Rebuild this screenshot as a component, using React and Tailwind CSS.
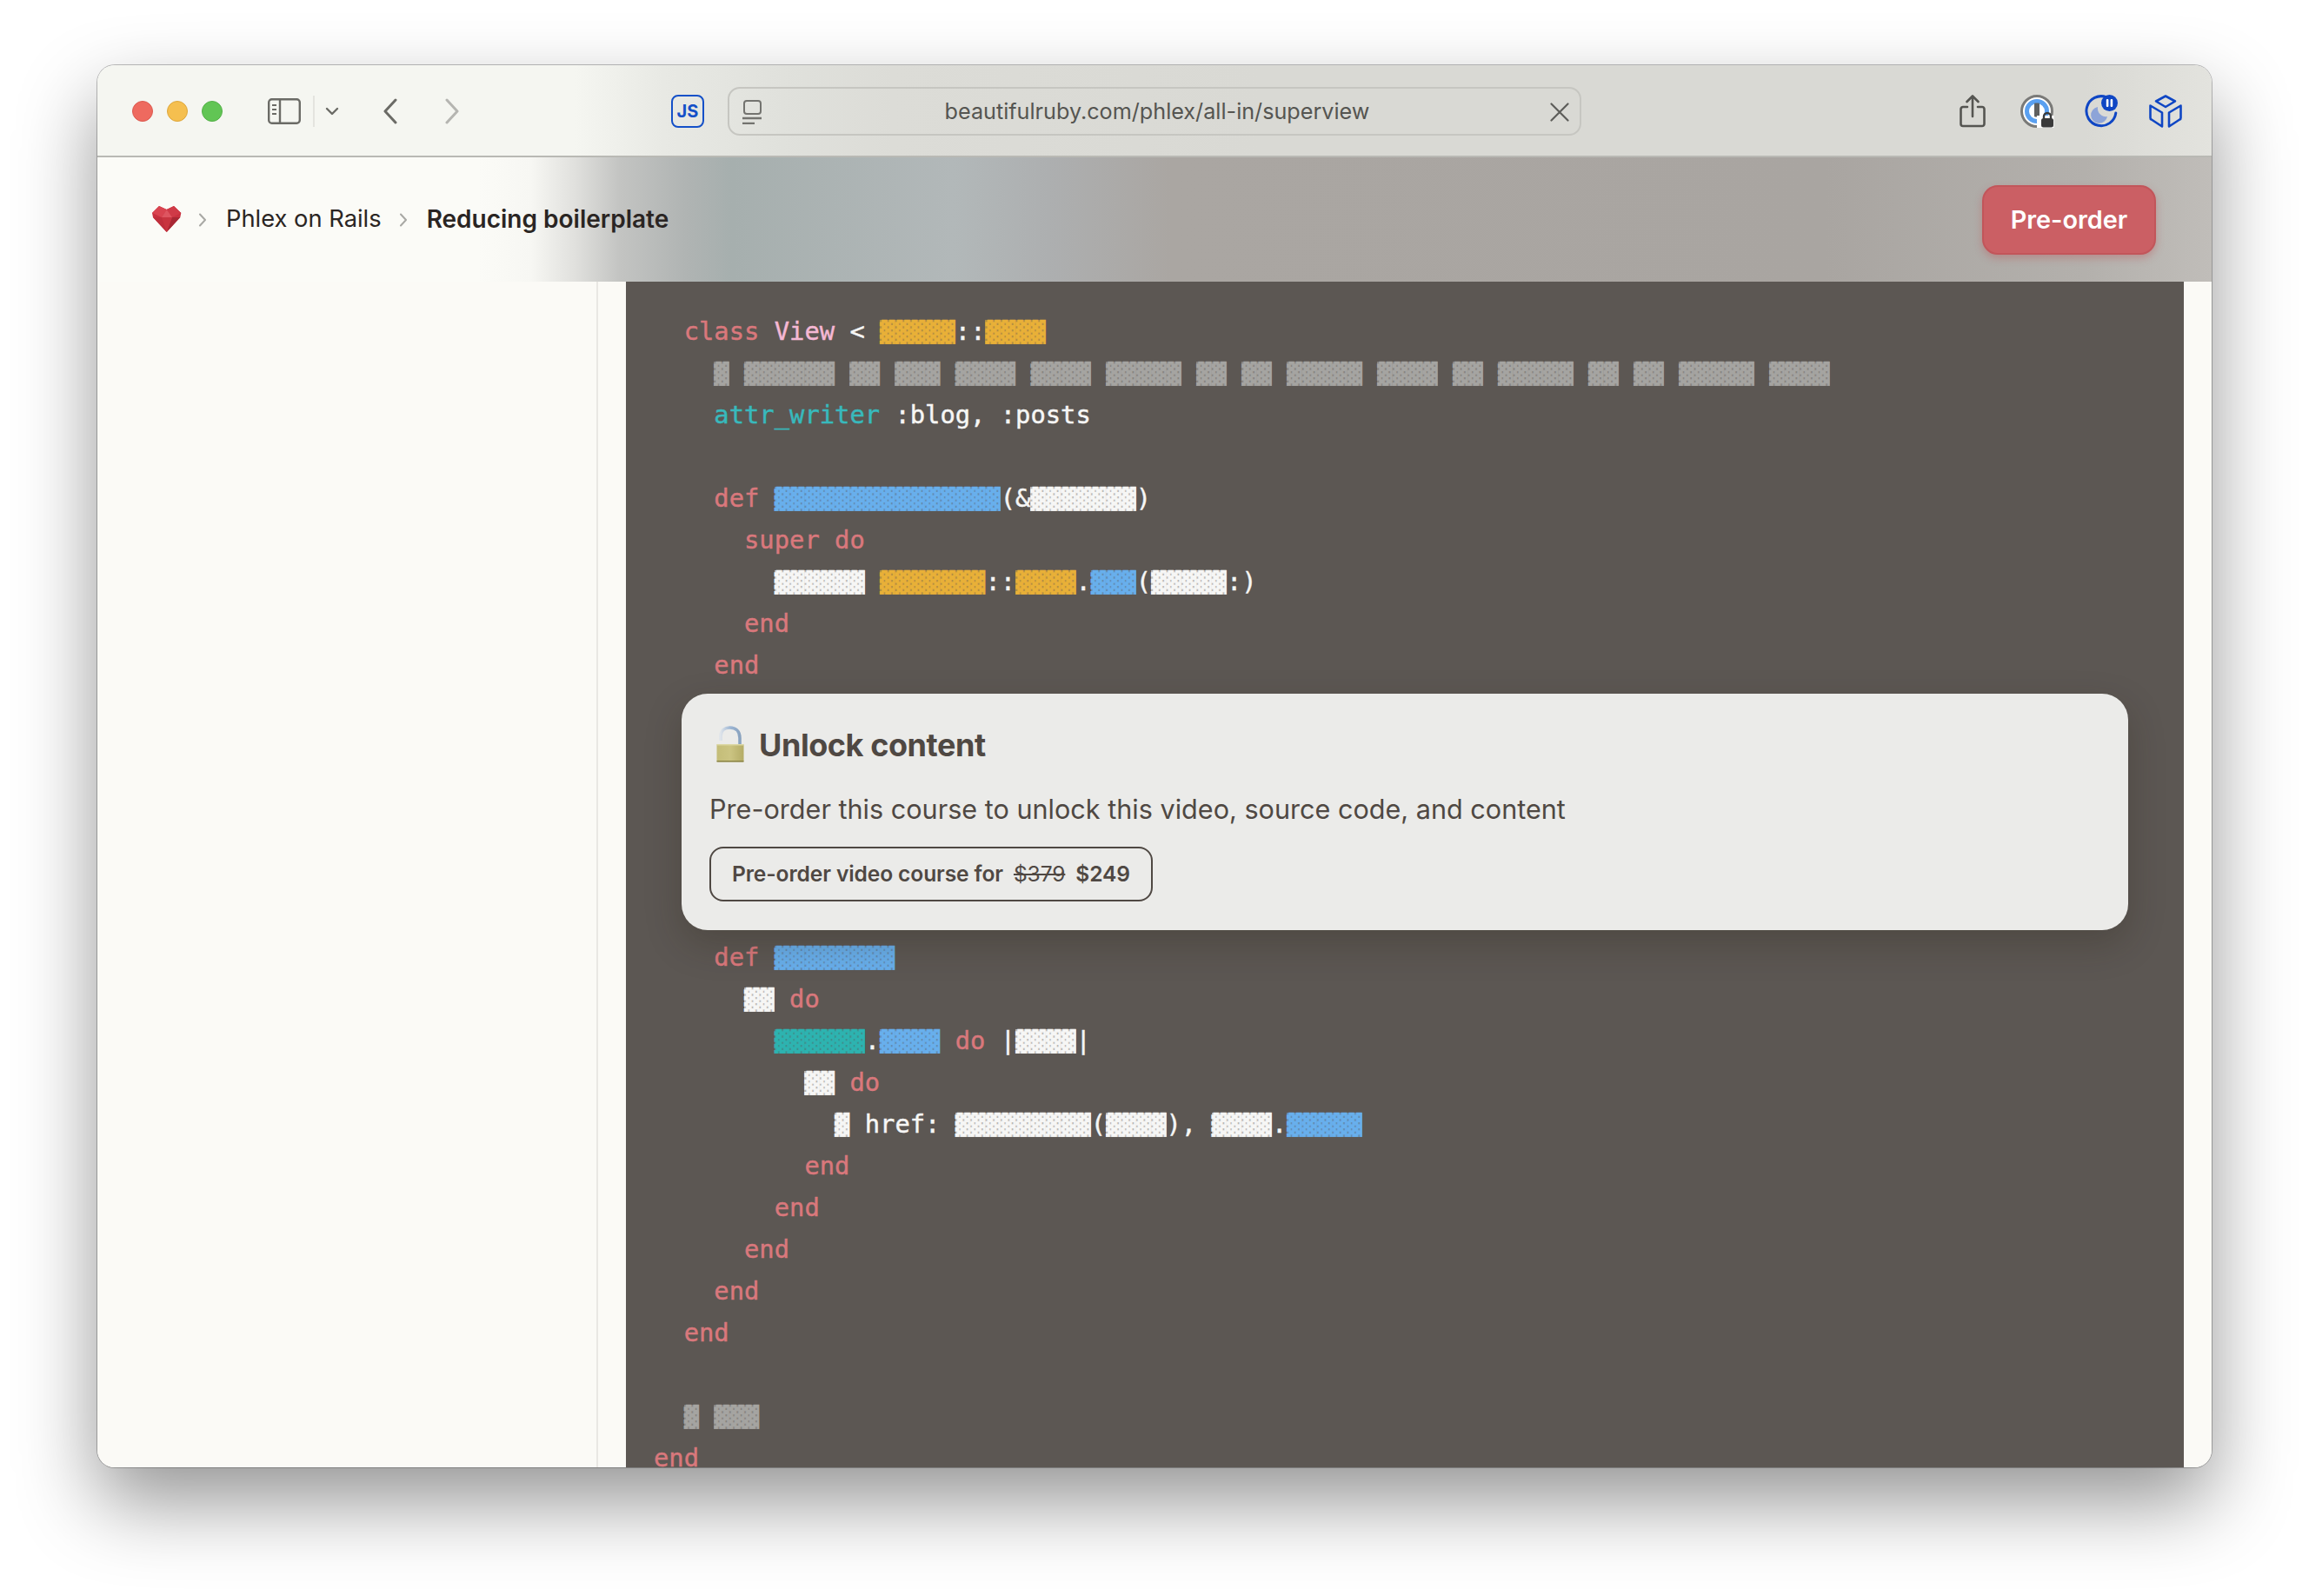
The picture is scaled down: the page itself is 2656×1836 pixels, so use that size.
const barBase = "inline-block h-[34px] leading-[34px] align-[-1px] scale-y-[0.82] [-webkit-text-stroke:0.3px]";
const K = ({ children }) => <span className="text-[#d9787c]">{children}</span>;
const W = ({ children }) => <span className={`${barBase} text-[#f6f6f5] bg-[#f6f6f5]/60`}>{children}</span>;
const G = ({ children }) => <span className={`${barBase} text-[#e8b038] bg-[#e8b038]/60`}>{children}</span>;
const B = ({ children }) => <span className={`${barBase} text-[#68afec] bg-[#68afec]/60`}>{children}</span>;
const T = ({ children }) => <span className={`${barBase} text-[#2db3b0] bg-[#2db3b0]/60`}>{children}</span>;
const A = ({ children }) => <span className={`${barBase} text-[#a5a4a1] bg-[#a5a4a1]/60`}>{children}</span>;
const bar = (n) => "▓".repeat(n);

function Line({ children }) {
  return <div className="h-[48px] leading-[48px] whitespace-pre">{children || " "}</div>;
}

function Code() {
  return (
    <div className="relative flex-1 bg-[#5c5753] pl-[32px] pt-[33px] overflow-hidden font-['DejaVu_Sans_Mono',monospace] text-[28.8px] text-[#f6f6f5] [-webkit-text-stroke:0.45px]">
      <Line>  <K>class</K> <span className="text-[#f5b8d4]">View</span> {"<"} <G>{bar(5)}</G>::<G>{bar(4)}</G></Line>
      <Line>    {[1,6,2,3,4,4,5,2,2,5,4,2,5,2,2,5,4].map((n, i) => (
        <span key={i}>{i > 0 ? " " : ""}<A>{bar(n)}</A></span>
      ))}</Line>
      <Line>    <span className="text-[#38b9bc]">attr_writer</span> :blog, :posts</Line>
      <Line />
      <Line>    <K>def</K> <B>{bar(15)}</B>(&amp;<W>{bar(7)}</W>)</Line>
      <Line>      <K>super do</K></Line>
      <Line>        <W>{bar(6)}</W> <G>{bar(7)}</G>::<G>{bar(4)}</G>.<B>{bar(3)}</B>(<W>{bar(5)}</W>:)</Line>
      <Line>      <K>end</K></Line>
      <Line>    <K>end</K></Line>
      <Line /><Line /><Line /><Line /><Line /><Line />
      <Line>    <K>def</K> <B>{bar(8)}</B></Line>
      <Line>      <W>{bar(2)}</W> <K>do</K></Line>
      <Line>        <T>{bar(6)}</T>.<B>{bar(4)}</B> <K>do</K> |<W>{bar(4)}</W>|</Line>
      <Line>          <W>{bar(2)}</W> <K>do</K></Line>
      <Line>            <W>{bar(1)}</W> href: <W>{bar(9)}</W>(<W>{bar(4)}</W>), <W>{bar(4)}</W>.<B>{bar(5)}</B></Line>
      <Line>          <K>end</K></Line>
      <Line>        <K>end</K></Line>
      <Line>      <K>end</K></Line>
      <Line>    <K>end</K></Line>
      <Line>  <K>end</K></Line>
      <Line />
      <Line>  <A>{bar(1)}</A> <A>{bar(3)}</A></Line>
      <Line><K>end</K></Line>

      <div className="absolute left-[64px] top-[474px] w-[1664px] h-[272px] rounded-[30px] bg-[#ebebe9] shadow-[0_16px_40px_rgba(40,30,20,0.25)] px-[32px] pt-[36px] font-['Inter',sans-serif] text-[#4f4843] [-webkit-text-stroke:0px]">
        <div className="flex items-center h-[44px]">
          <svg width="32" height="43" viewBox="0 0 32 43" className="ml-[8px] mr-[17px] shrink-0">
            <defs>
              <linearGradient id="lockBody" x1="0" y1="0" x2="1" y2="0">
                <stop offset="0" stopColor="#c4bd78" />
                <stop offset="0.5" stopColor="#cbc482" />
                <stop offset="1" stopColor="#b4ac66" />
              </linearGradient>
              <linearGradient id="shackle" x1="0" y1="0" x2="1" y2="0">
                <stop offset="0" stopColor="#dfe4ea" />
                <stop offset="0.5" stopColor="#9db6d4" />
                <stop offset="1" stopColor="#8aa3bf" />
              </linearGradient>
            </defs>
            <path d="M5 17V12C5 5 10 2 15.5 2C22 2 27 6 27 14V21" fill="none" stroke="url(#shackle)" strokeWidth="3.6" />
            <rect x="0.5" y="21" width="31" height="20.5" rx="1" fill="url(#lockBody)" />
            <rect x="0.5" y="21" width="31" height="1.5" fill="#dcd8a4" />
            <rect x="0.5" y="40" width="31" height="1.5" fill="#8b8548" />
          </svg>
          <h2 className="mt-[2px] text-[36px] font-bold leading-[44px] tracking-[-0.012em]">Unlock content</h2>
        </div>
        <p className="mt-[32px] text-[30.6px] leading-[42px]">Pre-order this course to unlock this video, source code, and content</p>
        <div className="mt-[22px] inline-flex items-center h-[63px] w-[510px] border-2 border-[#4f4843] rounded-[16px] px-[24px] text-[24.6px] font-semibold tracking-[-0.005em]">
          <span>Pre-order video course for</span>
          <span className="ml-[12px] line-through font-normal">$379</span>
          <span className="ml-[12px] font-semibold">$249</span>
        </div>
      </div>
    </div>
  );
}

function TitleBar() {
  return (
    <div className="h-[106px] shrink-0 flex items-center pl-[40px] pt-[2px] border-b-2 border-[#b9b9b4] bg-[linear-gradient(90deg,#f5f6f1_0%,#f5f6f1_22.6%,#e8e9e4_26.8%,#e0e1dc_32.4%,#dcdcd7_37.6%,#d9d9d4_55%,#d9d9d4_94%,#e3e3de_100%)]">
      <div className="flex gap-[16px]">
        <span className="w-[24px] h-[24px] rounded-full bg-[#ee6a5f] border border-[#dc5a50]" />
        <span className="w-[24px] h-[24px] rounded-full bg-[#f5bf4f] border border-[#dea73c]" />
        <span className="w-[24px] h-[24px] rounded-full bg-[#61c554] border border-[#54b048]" />
      </div>
      <svg width="38" height="30" viewBox="0 0 38 30" className="ml-[52px]" fill="none" stroke="#6b6b66">
        <rect x="1.2" y="1.2" width="35.6" height="27.6" rx="3.5" strokeWidth="2.4" />
        <path d="M14 1v28" strokeWidth="2.4" />
        <path d="M5 8h5M5 13h5M5 18h5" strokeWidth="2" />
      </svg>
      <span className="ml-[14px] w-[2px] h-[36px] bg-[#e4e4df]" />
      <svg width="16" height="10" viewBox="0 0 16 10" className="ml-[12px]" fill="none" stroke="#6b6b66" strokeWidth="2.4" strokeLinecap="round" strokeLinejoin="round">
        <path d="M2 2l6 6 6-6" />
      </svg>
      <svg width="18" height="30" viewBox="0 0 18 30" className="ml-[50px]" fill="none" stroke="#6b6b66" strokeWidth="3" strokeLinecap="round" strokeLinejoin="round">
        <path d="M15 2L3 15l12 13" />
      </svg>
      <svg width="18" height="30" viewBox="0 0 18 30" className="ml-[53px]" fill="none" stroke="#b5b5b1" strokeWidth="3" strokeLinecap="round" strokeLinejoin="round">
        <path d="M3 2l12 13L3 28" />
      </svg>
      <div className="ml-[243px] w-[38px] h-[38px] rounded-[8px] border-2 border-[#1450c8] flex items-center justify-center font-['Inter',sans-serif] text-[20px] font-bold text-[#1450c8] leading-none">JS</div>
      <div className="ml-[27px] w-[982px] h-[56px] rounded-[14px] border-2 border-[#c6c6c1] relative flex items-center justify-center font-['Inter',sans-serif] text-[25.2px] text-[#555551]">
        <svg width="24" height="28" viewBox="0 0 24 28" className="absolute left-[14px] top-[13px]" fill="none" stroke="#73736f">
          <rect x="3" y="1" width="19" height="15" rx="3" strokeWidth="2" />
          <path d="M1 21h22" strokeWidth="2.4" />
          <path d="M1 27h14" strokeWidth="2.4" />
        </svg>
        <span className="ml-[6px] mt-[2px]">beautifulruby.com/phlex/all-in/superview</span>
        <svg width="22" height="22" viewBox="0 0 22 22" className="absolute right-[12px] top-[16px]" fill="none" stroke="#5d5d59" strokeWidth="2.2" strokeLinecap="round">
          <path d="M1.5 1.5l19 19M20.5 1.5l-19 19" />
        </svg>
      </div>
      <svg width="30" height="38" viewBox="0 0 30 38" className="ml-[435px]" fill="none" stroke="#555551" strokeWidth="2.6" strokeLinecap="round" strokeLinejoin="round">
        <path d="M9 14H4a2.5 2.5 0 0 0-2.5 2.5v17A2.5 2.5 0 0 0 4 36h22a2.5 2.5 0 0 0 2.5-2.5v-17A2.5 2.5 0 0 0 26 14h-5" />
        <path d="M15 25V2M8.5 8L15 1.5 21.5 8" />
      </svg>
      <svg width="40" height="38" viewBox="0 0 40 38" className="ml-[40px]">
        <circle cx="19" cy="19" r="17.5" fill="#ffffff" stroke="#7a7a78" strokeWidth="3" />
        <circle cx="19" cy="19" r="11.5" fill="#ffffff" stroke="#5aa0f0" strokeWidth="5" />
        <rect x="16" y="9.5" width="6" height="16" rx="1" fill="#5f6060" />
        <rect x="19" y="24" width="19.5" height="14" fill="#ffffff" />
        <rect x="24" y="27" width="14" height="10.5" rx="2.5" fill="#3a3a3a" />
        <path d="M27 27v-2a4 4 0 0 1 8 0v2" fill="none" stroke="#3a3a3a" strokeWidth="2.4" />
      </svg>
      <svg width="38" height="38" viewBox="0 0 38 38" className="ml-[34px]">
        <path d="M25 2.8A17 17 0 1 0 35.8 21" fill="none" stroke="#0f46c4" strokeWidth="3" strokeLinecap="round" />
        <path d="M15 14A9.5 9.5 0 1 0 26 25A9.5 9.5 0 0 1 15 14z" fill="#8da4d8" />
        <circle cx="28.5" cy="9.5" r="9.5" fill="#0f46c4" />
        <rect x="24.8" y="5" width="2.6" height="9" rx="1" fill="#fff" />
        <rect x="29.6" y="5" width="2.6" height="9" rx="1" fill="#fff" />
      </svg>
      <svg width="38" height="38" viewBox="0 0 38 38" className="ml-[36px]" fill="none" stroke="#0f46c4" strokeWidth="2.6" strokeLinejoin="round">
        <path d="M19 1.5L30 7.5 19 14 8 7.5z" />
        <path d="M1.5 12.5L15 20.5V36.5L2.8 28.5a2 2 0 0 1-1.3-2z" />
        <path d="M36.5 12.5L23 20.5V36.5l12.2-8a2 2 0 0 0 1.3-2z" />
      </svg>
    </div>
  );
}

function Header() {
  return (
    <div className="h-[143px] shrink-0 flex items-center pl-[63px] pr-[64px] bg-[linear-gradient(90deg,#fbfbf7_0%,#fbfbf7_18%,#f7f7f3_20.5%,#e0e0dd_22.6%,#c3c4c2_24.7%,#b0b4b3_27.8%,#a6afae_30%,#b2b8b9_40.5%,#adafb0_45%,#aaa6a2_50.8%,#a9a5a1_81.7%,#b3b0ac_94%,#c0bdb9_100%)] font-['Inter',sans-serif] text-[#2a2523]">
      <svg width="34" height="30" viewBox="0 0 34 30" className="shrink-0 mb-[1px]">
        <path d="M8 0L16.7 4 25 0 33.3 8 32.3 13 16.7 30 1 13 0 8z" fill="#c8313f" />
        <path d="M8 0L16.7 4 11 13 0 8z" fill="#d94450" />
        <path d="M25 0L16.7 4 23 13 33.3 8z" fill="#cf3a47" />
        <path d="M16.7 4L23 13H11z" fill="#de5560" />
        <path d="M1 13L16.7 30 11 13z" fill="#bf2f3c" />
        <path d="M32.3 13L16.7 30 23 13z" fill="#a82834" />
        <path d="M11 13H23L16.7 30z" fill="#c8343f" />
      </svg>
      <svg width="10" height="16" viewBox="0 0 10 16" className="ml-[19px]" fill="none" stroke="#a8a8a4" strokeWidth="2" strokeLinecap="round" strokeLinejoin="round"><path d="M2 1.5L8 8l-6 6.5" /></svg>
      <span className="ml-[22px] text-[27.3px] mb-[1px]">Phlex on Rails</span>
      <svg width="10" height="16" viewBox="0 0 10 16" className="ml-[20px]" fill="none" stroke="#a8a8a4" strokeWidth="2" strokeLinecap="round" strokeLinejoin="round"><path d="M2 1.5L8 8l-6 6.5" /></svg>
      <span className="ml-[22px] text-[28px] font-semibold mb-[1px]">Reducing boilerplate</span>
      <div className="ml-auto w-[200px] h-[80px] rounded-[18px] bg-[#cb5f64] border-2 border-[#c2555a] shadow-[0_4px_10px_rgba(190,70,75,0.35)] flex items-center justify-center text-white text-[28.8px] font-semibold">Pre-order</div>
    </div>
  );
}

export default function App() {
  return (
    <div className="w-[2656px] h-[1836px] bg-white pt-[75px] pl-[112px] overflow-hidden">
      <div className="w-[2432px] h-[1613px] rounded-[20px] overflow-hidden flex flex-col ring-1 ring-[#00000040] shadow-[0_40px_90px_rgba(0,0,0,0.42)]">
        <TitleBar />
        <Header />
        <div className="flex-1 flex min-h-0 bg-[#fbfaf6]">
          <div className="w-[576px] shrink-0 border-r-2 border-[#e9e7e3]" />
          <div className="w-[32px] shrink-0" />
          <Code />
          <div className="w-[32px] shrink-0" />
        </div>
      </div>
    </div>
  );
}
